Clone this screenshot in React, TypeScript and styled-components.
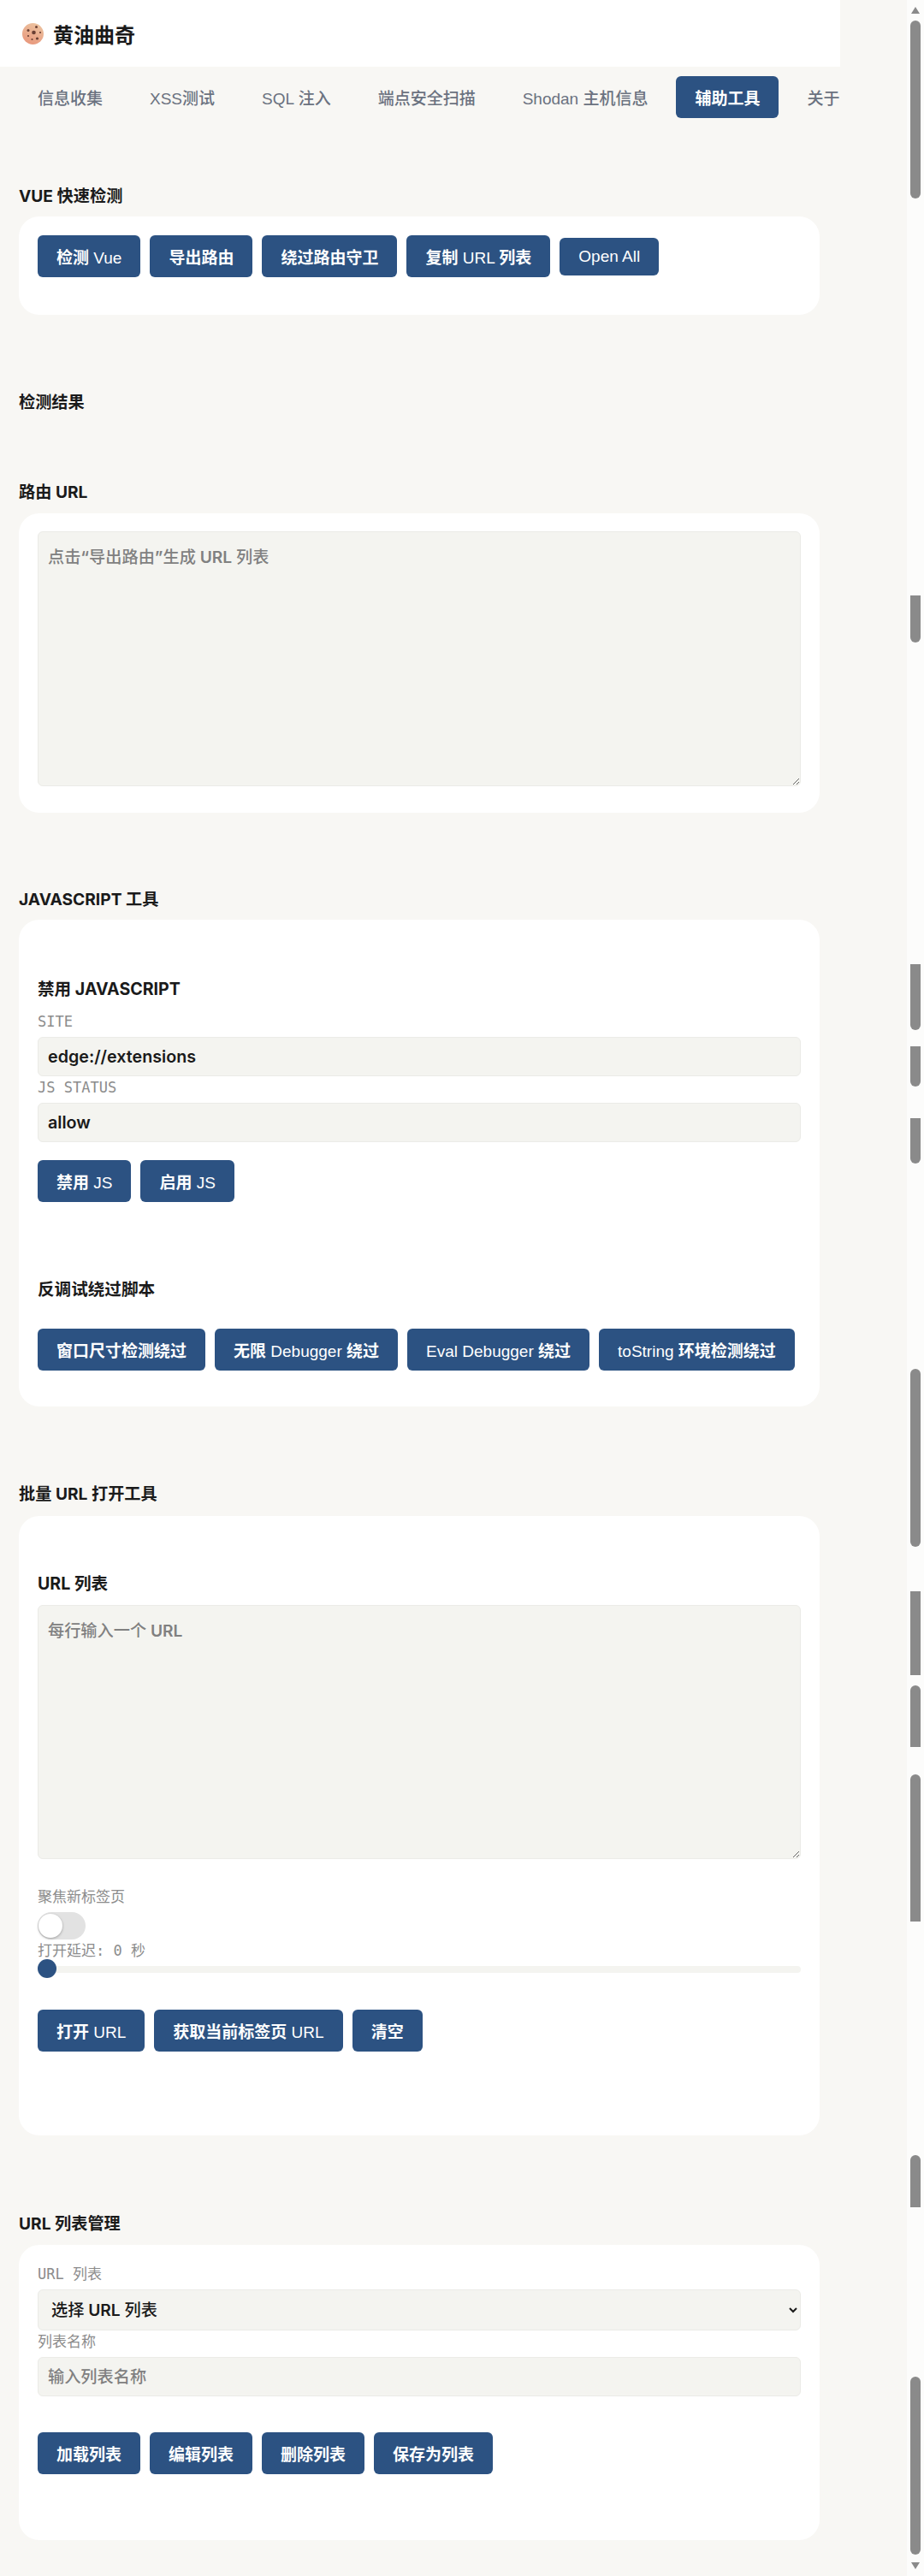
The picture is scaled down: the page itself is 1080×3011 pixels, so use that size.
import styled, { createGlobalStyle } from "styled-components";

const GlobalStyle = createGlobalStyle`
  html, body {
    margin: 0;
    padding: 0;
    background: #f8f7f4;
  }
  body {
    font-family: Inter, "Noto Sans CJK SC", sans-serif;
    color: #1a1a1a;
    overflow: hidden;
  }
  * {
    box-sizing: border-box;
  }
`;

const Page = styled.div`
  width: 1080px;
  height: 3011px;
  display: flex;
  overflow: hidden;
`;

const Main = styled.div`
  width: 982px;
  flex-shrink: 0;
  overflow: hidden;
`;

const Header = styled.header`
  height: 78px;
  background: #fff;
  display: flex;
  align-items: center;
  padding-left: 26px;
  gap: 11px;
  font-size: 24px;
  font-weight: 700;
`;

const Tabs = styled.nav`
  height: 71px;
  display: flex;
  align-items: flex-start;
  padding: 11px 0 0 22px;
  gap: 11px;
  overflow: hidden;
`;

const Tab = styled.div<{ $active?: boolean }>`
  flex-shrink: 0;
  height: 49px;
  display: flex;
  align-items: center;
  padding: 0 22px;
  border-radius: 6px;
  font-family: "Liberation Sans", "Noto Sans CJK SC", sans-serif;
  font-size: 19px;
  font-weight: ${({ $active }) => ($active ? 600 : 500)};
  white-space: pre;
  color: ${({ $active }) => ($active ? "#fff" : "#6b7280")};
  background: ${({ $active }) => ($active ? "#2c5282" : "transparent")};
`;

const Content = styled.main`
  padding: 0 22px;
`;

const SectionTitle = styled.h2<{ $top: number }>`
  margin: ${({ $top }) => $top}px 0 0;
  font-size: 19.2px;
  line-height: 24px;
  font-weight: 700;
  text-transform: uppercase;
`;

const Card = styled.section<{ $top?: number; $height: number; $pad: number }>`
  margin-top: ${({ $top }) => $top ?? 12}px;
  width: 936px;
  height: ${({ $height }) => $height}px;
  background: #fff;
  border-radius: 24px;
  padding: ${({ $pad }) => $pad}px 22px 0;
`;

const ButtonRow = styled.div<{ $top?: number }>`
  display: flex;
  gap: 11px;
  align-items: flex-start;
  margin-top: ${({ $top }) => $top ?? 0}px;
`;

const Button = styled.button<{ $small?: boolean }>`
  height: ${({ $small }) => ($small ? 44 : 49)}px;
  margin-top: ${({ $small }) => ($small ? 3 : 0)}px;
  padding: 0 22px;
  border: none;
  border-radius: 6px;
  background: #2c5282;
  color: #fff;
  font-family: "Liberation Sans", "Noto Sans CJK SC", sans-serif;
  font-size: 19px;
  font-weight: 400;
  white-space: nowrap;
`;

const Han = styled.span`
  font-weight: 600;
`;

const fieldBox = `
  display: block;
  width: 100%;
  background: #f4f4f0;
  border: 1px solid #ebebe7;
  border-radius: 6px;
  font-family: "Inter SemiBold", "Inter Semi Bold", Inter, "Noto Sans CJK SC", sans-serif;
  font-size: 19.2px;
  color: #1a1a1a;
  outline: none;
`;

const TextArea = styled.textarea<{ $height: number }>`
  ${fieldBox}
  height: ${({ $height }) => $height}px;
  padding: 16px 11px;
  line-height: 27px;
  font-weight: 500;
  resize: vertical;
  &::placeholder {
    color: #808080;
  }
`;

const Input = styled.input<{ $filled?: boolean }>`
  ${fieldBox}
  height: 46px;
  padding: 0 11px;
  font-size: ${({ $filled }) => ($filled ? 19.7 : 19.2)}px;
  font-weight: ${({ $filled }) => ($filled ? 700 : 500)};
  &::placeholder {
    color: #808080;
  }
`;

const Select = styled.select`
  ${fieldBox}
  height: 48px;
  padding: 0 11px;
  font-weight: 500;
`;

const FieldLabel = styled.label<{ $top?: number }>`
  display: block;
  height: 31px;
  margin-top: ${({ $top }) => $top ?? 0}px;
  padding-top: 3px;
  font-family: "DejaVu Sans Mono", "Noto Sans CJK SC", monospace;
  font-size: 17px;
  line-height: 20px;
  white-space: pre;
  color: #8c8c8c;
`;

const SubTitle = styled.h3<{ $top: number; $bottom: number }>`
  margin: ${({ $top }) => $top}px 0 ${({ $bottom }) => $bottom}px;
  font-size: 19.6px;
  line-height: 26px;
  font-weight: 700;
  text-transform: uppercase;
`;

const Toggle = styled.div`
  position: relative;
  width: 56px;
  height: 32px;
  border-radius: 16px;
  background: #e2e2e2;
`;

const ToggleKnob = styled.span`
  position: absolute;
  left: 1px;
  top: 2px;
  width: 28px;
  height: 28px;
  border-radius: 50%;
  background: #fff;
  box-shadow: 0 1px 3px rgba(0, 0, 0, 0.3);
`;

const Slider = styled.div`
  position: relative;
  height: 8px;
  border-radius: 4px;
  background: #f4f4f0;
`;

const SliderThumb = styled.span`
  position: absolute;
  left: 0;
  top: -8px;
  width: 22px;
  height: 22px;
  border-radius: 50%;
  background: #2c5282;
`;

const ScrollTrack = styled.aside`
  position: relative;
  margin-left: 78px;
  width: 20px;
  height: 3011px;
  background: #fcfcfb;
`;

const Thumb = styled.span<{ $top: number; $height: number; $radius: string }>`
  position: absolute;
  left: 4px;
  top: ${({ $top }) => $top}px;
  width: 12px;
  height: ${({ $height }) => $height}px;
  border-radius: ${({ $radius }) => $radius};
  background: #8a8a8a;
`;

const Arrow = styled.svg<{ $top: number }>`
  position: absolute;
  left: 5px;
  top: ${({ $top }) => $top}px;
`;

const BOTH = "6px";
const TOP = "6px 6px 0 0";
const BOTTOM = "0 0 6px 6px";

const thumbs: [number, number, string][] = [
  [24, 208, BOTH],
  [696, 55, BOTTOM],
  [1127, 77, BOTTOM],
  [1223, 47, BOTTOM],
  [1307, 53, BOTTOM],
  [1600, 208, BOTH],
  [1860, 98, "0"],
  [1970, 72, TOP],
  [2074, 172, TOP],
  [2519, 61, TOP],
  [2778, 208, BOTH],
];

const Cookie = () => (
  <svg width="25" height="25" viewBox="0 0 25 25">
    <defs>
      <linearGradient id="dough" x1="0.7" y1="0" x2="0.3" y2="1">
        <stop offset="0" stopColor="#ecc3a0" />
        <stop offset="1" stopColor="#e8977c" />
      </linearGradient>
    </defs>
    <circle cx="12.5" cy="12.5" r="12.5" fill="url(#dough)" />
    <circle cx="13.5" cy="11" r="2.3" fill="#6b4034" />
    <circle cx="7" cy="8.5" r="1.5" fill="#6b4034" />
    <circle cx="16.5" cy="4.5" r="1.5" fill="#6b4034" />
    <circle cx="7" cy="15" r="1.1" fill="#6b4034" />
    <circle cx="17.5" cy="18" r="1.6" fill="#6b4034" />
    <circle cx="11.5" cy="19" r="1.1" fill="#6b4034" />
    <circle cx="21" cy="11" r="1.1" fill="#6b4034" />
  </svg>
);

export default function App() {
  return (
    <Page>
      <GlobalStyle />
      <Main>
        <Header>
          <Cookie />
          黄油曲奇
        </Header>
        <Tabs>
          <Tab>信息收集</Tab>
          <Tab>XSS测试</Tab>
          <Tab>SQL 注入</Tab>
          <Tab>端点安全扫描</Tab>
          <Tab>Shodan 主机信息</Tab>
          <Tab $active>辅助工具</Tab>
          <Tab>关于</Tab>
        </Tabs>
        <Content>
          <SectionTitle $top={68}>Vue 快速检测</SectionTitle>
          <Card $height={115} $pad={22}>
            <ButtonRow>
              <Button><Han>检测</Han> Vue</Button>
              <Button><Han>导出路由</Han></Button>
              <Button><Han>绕过路由守卫</Han></Button>
              <Button><Han>复制</Han> URL <Han>列表</Han></Button>
              <Button $small>Open All</Button>
            </ButtonRow>
          </Card>
          <SectionTitle $top={90}>检测结果</SectionTitle>
          <SectionTitle $top={81}>路由 URL</SectionTitle>
          <Card $top={13} $height={350} $pad={21}>
            <TextArea $height={298} placeholder="点击“导出路由”生成 URL 列表" />
          </Card>
          <SectionTitle $top={89}>JavaScript 工具</SectionTitle>
          <Card $height={569} $pad={68}>
            <SubTitle $top={0} $bottom={12}>禁用 JavaScript</SubTitle>
            <FieldLabel>SITE</FieldLabel>
            <Input $filled defaultValue="edge://extensions" />
            <FieldLabel>JS STATUS</FieldLabel>
            <Input $filled defaultValue="allow" />
            <ButtonRow $top={21}>
              <Button><Han>禁用</Han> JS</Button>
              <Button><Han>启用</Han> JS</Button>
            </ButtonRow>
            <SubTitle $top={89} $bottom={33}>反调试绕过脚本</SubTitle>
            <ButtonRow>
              <Button><Han>窗口尺寸检测绕过</Han></Button>
              <Button><Han>无限</Han> Debugger <Han>绕过</Han></Button>
              <Button>Eval Debugger <Han>绕过</Han></Button>
              <Button>toString <Han>环境检测绕过</Han></Button>
            </ButtonRow>
          </Card>
          <SectionTitle $top={90}>批量 URL 打开工具</SectionTitle>
          <Card $top={14} $height={724} $pad={66}>
            <SubTitle $top={0} $bottom={12}>URL 列表</SubTitle>
            <TextArea $height={297} placeholder="每行输入一个 URL" />
            <FieldLabel as="div" $top={31}>聚焦新标签页</FieldLabel>
            <Toggle>
              <ToggleKnob />
            </Toggle>
            <FieldLabel as="div">打开延迟: 0 秒</FieldLabel>
            <Slider>
              <SliderThumb />
            </Slider>
            <ButtonRow $top={43}>
              <Button><Han>打开</Han> URL</Button>
              <Button><Han>获取当前标签页</Han> URL</Button>
              <Button><Han>清空</Han></Button>
            </ButtonRow>
          </Card>
          <SectionTitle $top={91}>URL 列表管理</SectionTitle>
          <Card $top={13} $height={345} $pad={21}>
            <FieldLabel>URL 列表</FieldLabel>
            <Select defaultValue="">
              <option value="">选择 URL 列表</option>
            </Select>
            <FieldLabel>列表名称</FieldLabel>
            <Input placeholder="输入列表名称" />
            <ButtonRow $top={42}>
              <Button><Han>加载列表</Han></Button>
              <Button><Han>编辑列表</Han></Button>
              <Button><Han>删除列表</Han></Button>
              <Button><Han>保存为列表</Han></Button>
            </ButtonRow>
          </Card>
        </Content>
      </Main>
      <ScrollTrack>
        <Arrow $top={8} width="10" height="8" viewBox="0 0 10 8">
          <path d="M5 0 L10 8 L0 8 Z" fill="#8a8a8a" />
        </Arrow>
        {thumbs.map(([top, height, radius]) => (
          <Thumb key={top} $top={top} $height={height} $radius={radius} />
        ))}
        <Arrow $top={2995} width="10" height="8" viewBox="0 0 10 8">
          <path d="M0 0 L10 0 L5 8 Z" fill="#8a8a8a" />
        </Arrow>
      </ScrollTrack>
    </Page>
  );
}
